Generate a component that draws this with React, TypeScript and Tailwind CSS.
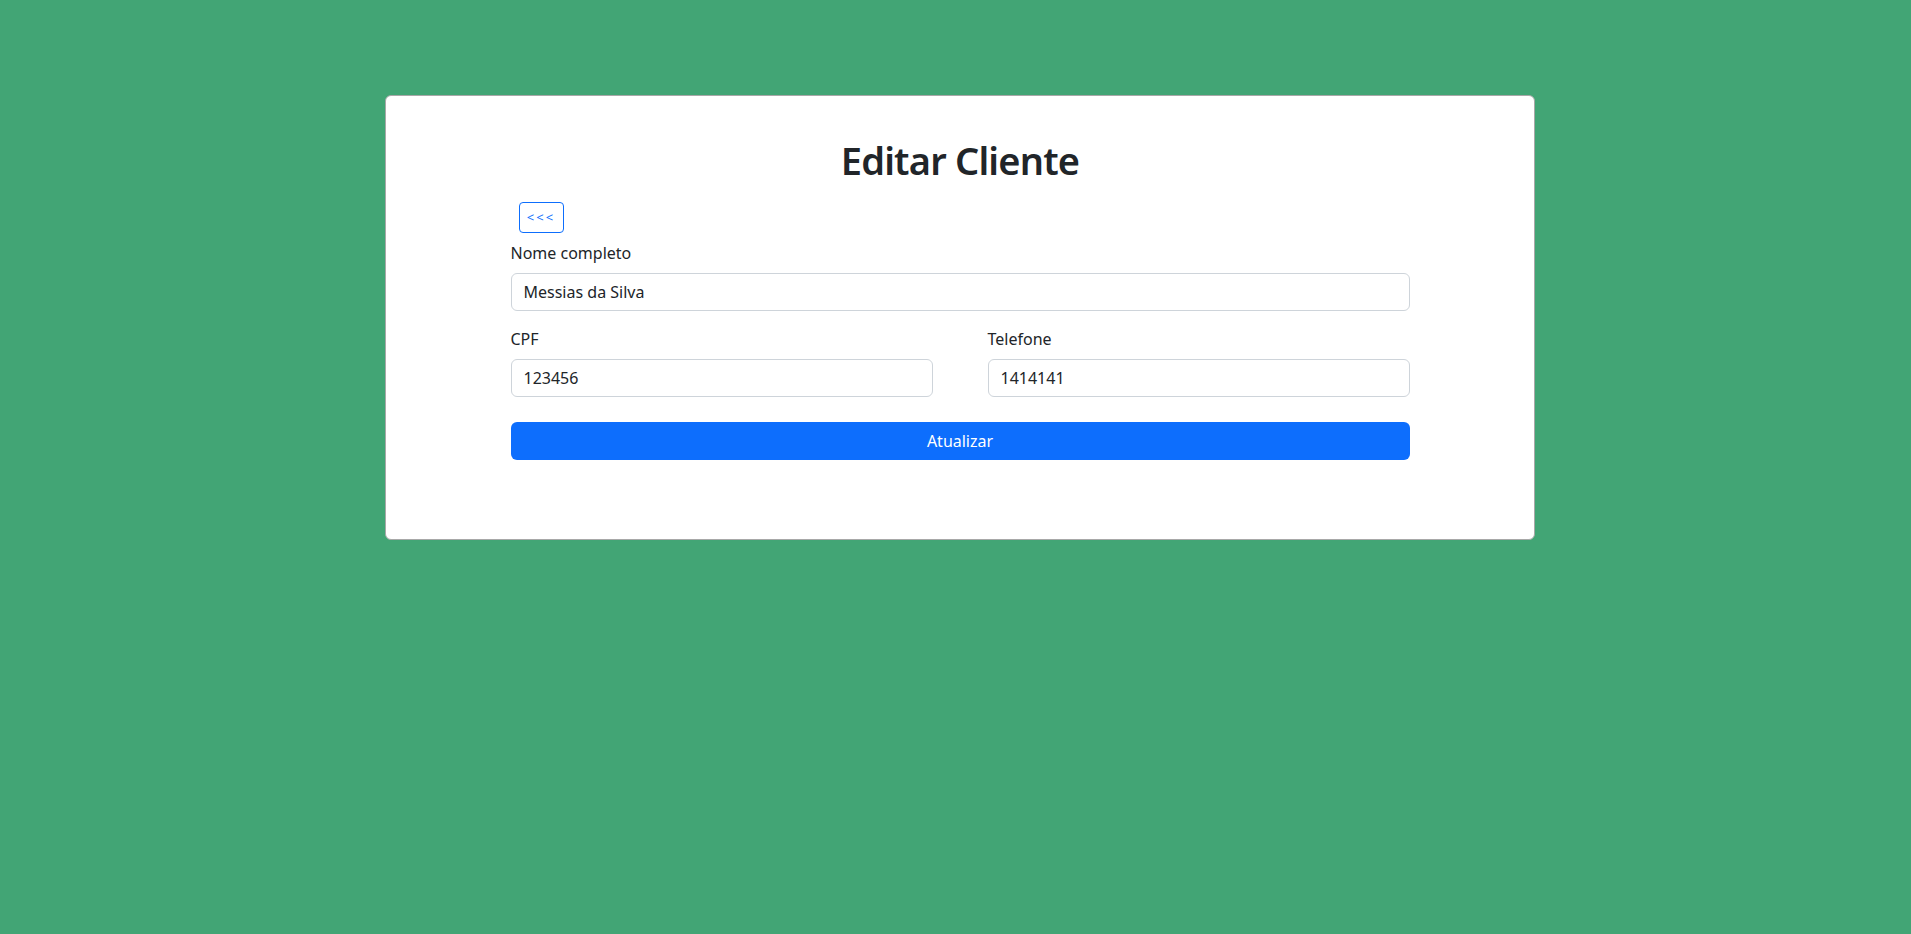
import { useState } from "react";

const fontStack = { fontFamily: '"Noto Sans", "Open Sans", Arial, sans-serif' };

export default function App() {
  const [nome, setNome] = useState("Messias da Silva");
  const [cpf, setCpf] = useState("123456");
  const [telefone, setTelefone] = useState("1414141");

  return (
    <div className="min-h-[934px] bg-[#42a575] pt-[95px] text-[#212529]" style={fontStack}>
      <div className="ml-[385px] w-[1150px] rounded-[6px] border border-[#a8a8a8] bg-white pt-[41px] pb-[79px]">
        <h1 className="mb-2 text-center text-[38px] leading-[46px] font-semibold tracking-[-0.8px]">Editar Cliente</h1>
        <form className="mx-auto w-[899px]" onSubmit={(e) => e.preventDefault()}>
          <div className="pl-2 pt-[11px]">
            <button
              type="button"
              className="h-[31px] w-[45px] rounded-[4px] border border-[#0d6efd] text-[13px] leading-[21px] tracking-[2px] text-[#0d6efd]"
            >
              &lt;&lt;&lt;
            </button>
          </div>
          <div className="mt-2">
            <label className="mb-2 block text-[16px] leading-6">Nome completo</label>
            <input
              className="block h-[38px] w-full rounded-[6px] border border-[#ced4da] px-3 text-[16px] outline-none"
              value={nome}
              onChange={(e) => setNome(e.target.value)}
            />
          </div>
          <div className="mt-4 grid grid-cols-2 gap-[55px]">
            <div>
              <label className="mb-2 block text-[16px] leading-6">CPF</label>
              <input
                className="block h-[38px] w-full rounded-[6px] border border-[#ced4da] px-3 text-[16px] outline-none"
                value={cpf}
                onChange={(e) => setCpf(e.target.value)}
              />
            </div>
            <div>
              <label className="mb-2 block text-[16px] leading-6">Telefone</label>
              <input
                className="block h-[38px] w-full rounded-[6px] border border-[#ced4da] px-3 text-[16px] outline-none"
                value={telefone}
                onChange={(e) => setTelefone(e.target.value)}
              />
            </div>
          </div>
          <button
            type="submit"
            className="mt-[25px] block h-[38px] w-full rounded-[6px] bg-[#0d6efd] text-[16px] text-white"
          >
            Atualizar
          </button>
        </form>
      </div>
    </div>
  );
}
